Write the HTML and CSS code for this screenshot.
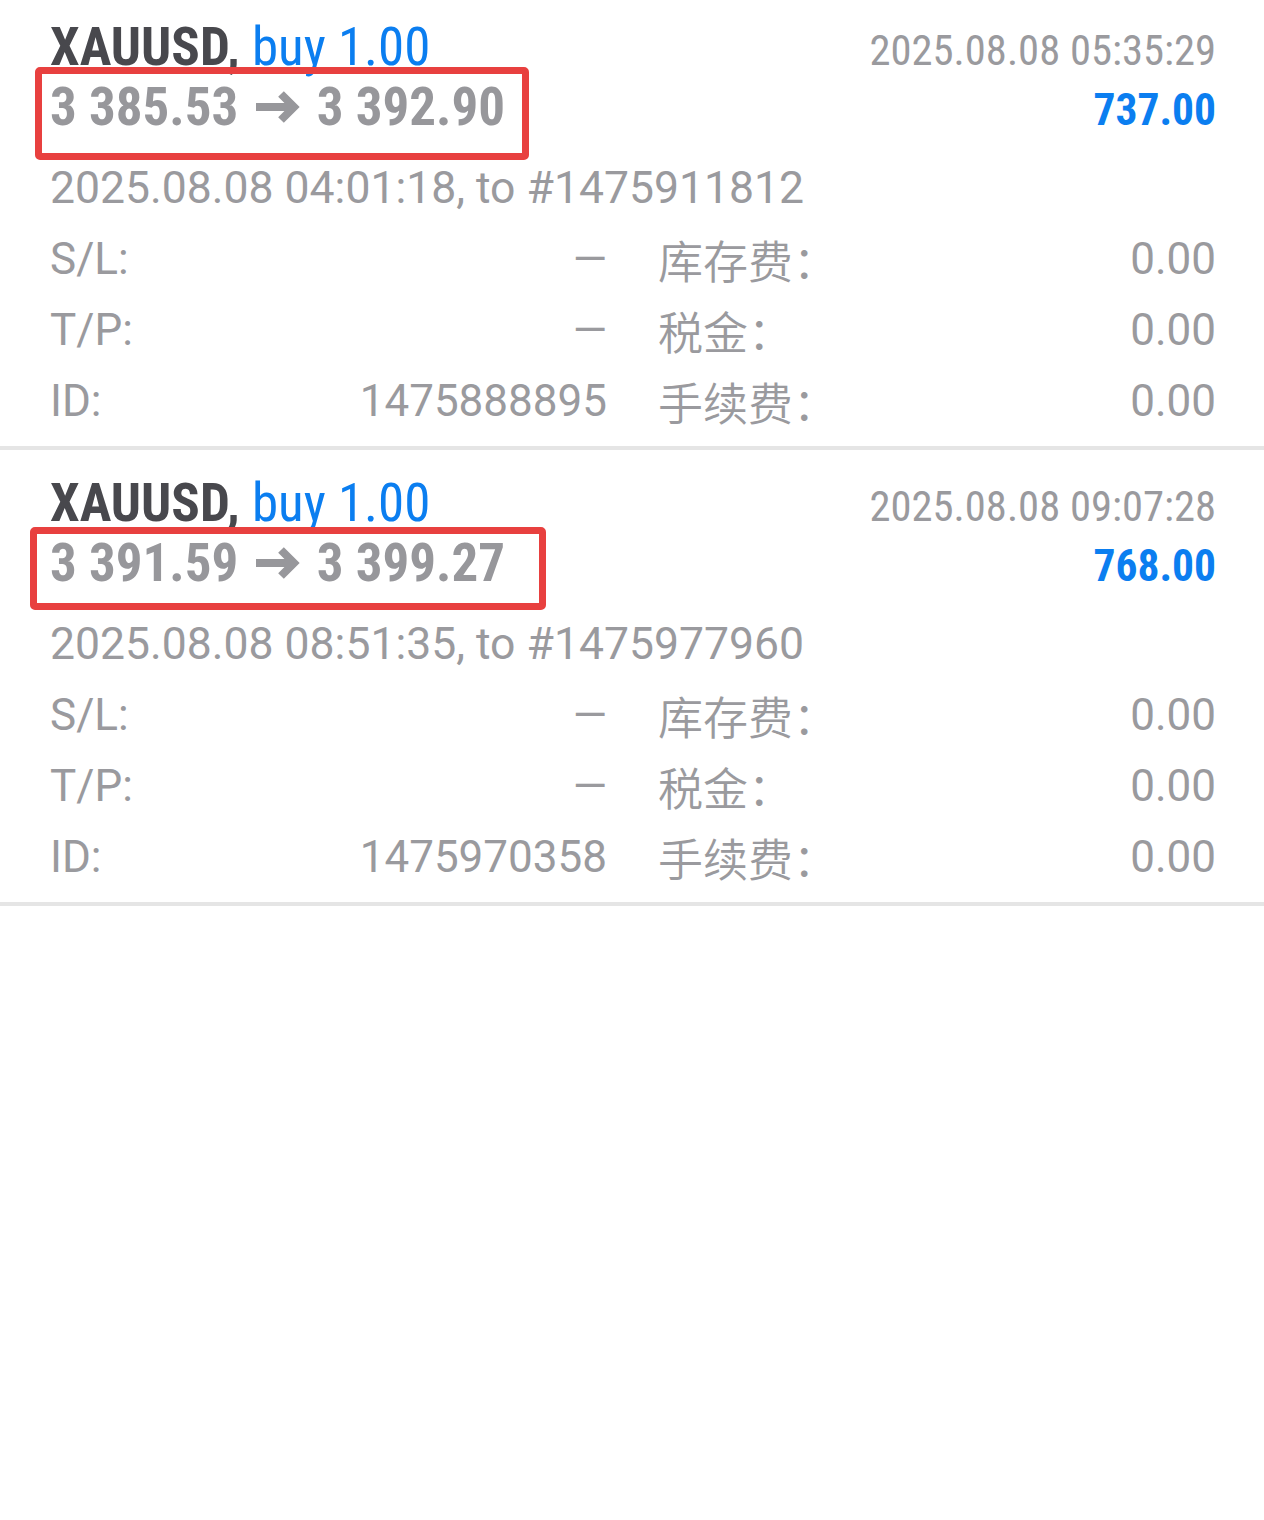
FILE: index.html
```html
<!DOCTYPE html>
<html lang="zh">
<head>
  <meta charset="UTF-8" />
  <meta name="viewport" content="width=device-width, initial-scale=1.0" />
  <title>History</title>
  <link rel="stylesheet" href="styles.css">
</head>
<body>
  <div class="deal">
    <div class="line line-top">
      <span class="title"><span class="symbol">XAUUSD,</span> <span class="side">buy 1.00</span></span>
      <span class="open-time">2025.08.08 05:35:29</span>
    </div>
    <div class="line line-price">
      <span class="price mark-a">3 385.53 <svg class="arrow" viewBox="0 0 45 36"><path d="M0 18H38M25 5L38 18L25 31"/></svg> 3 392.90</span>
      <span class="profit">737.00</span>
    </div>
    <div class="close-info">2025.08.08 04:01:18, to #1475911812</div>
    <div class="details">
      <div class="cell"><span>S/L:</span><span>—</span></div>
      <div class="cell"><span class="cjk">库存费：</span><span>0.00</span></div>
      <div class="cell"><span>T/P:</span><span>—</span></div>
      <div class="cell"><span class="cjk">税金：</span><span>0.00</span></div>
      <div class="cell"><span>ID:</span><span>1475888895</span></div>
      <div class="cell"><span class="cjk">手续费：</span><span>0.00</span></div>
    </div>
  </div>

  <div class="deal">
    <div class="line line-top">
      <span class="title"><span class="symbol">XAUUSD,</span> <span class="side">buy 1.00</span></span>
      <span class="open-time">2025.08.08 09:07:28</span>
    </div>
    <div class="line line-price">
      <span class="price mark-b">3 391.59 <svg class="arrow" viewBox="0 0 45 36"><path d="M0 18H38M25 5L38 18L25 31"/></svg> 3 399.27</span>
      <span class="profit">768.00</span>
    </div>
    <div class="close-info">2025.08.08 08:51:35, to #1475977960</div>
    <div class="details">
      <div class="cell"><span>S/L:</span><span>—</span></div>
      <div class="cell"><span class="cjk">库存费：</span><span>0.00</span></div>
      <div class="cell"><span>T/P:</span><span>—</span></div>
      <div class="cell"><span class="cjk">税金：</span><span>0.00</span></div>
      <div class="cell"><span>ID:</span><span>1475970358</span></div>
      <div class="cell"><span class="cjk">手续费：</span><span>0.00</span></div>
    </div>
  </div>
</body>
</html>
```

FILE: styles.css
```css
body {
  margin: -6px 0 0;
  background-color: #fff;
  font-family: Roboto, "Noto Sans CJK SC", sans-serif;
  color: #9a9a9e;
}
.deal {
  padding: 23px 48px 9px 50px;
  border-bottom: 4px solid #e5e5e5;
}
.line {
  display: flex;
  justify-content: space-between;
  align-items: baseline;
  height: 60px;
  line-height: 60px;
}
.title {
  font-size: 53px;
  font-stretch: 87.5%;
}
.symbol {
  font-weight: bold;
  color: #48484d;
}
.side {
  color: #0b7ef0;
}
.open-time {
  font-size: 42.6px;
  font-stretch: 87.5%;
}
.price {
  position: relative;
  font-size: 53px;
  font-weight: bold;
  font-stretch: 87.5%;
  color: #97979b;
}
.arrow {
  width: 45px;
  height: 36px;
  margin: 0 4px 0 5px;
  vertical-align: baseline;
  fill: none;
  stroke: #97979b;
  stroke-width: 8;
}
.price::after {
  content: "";
  position: absolute;
  border: 7px solid #e8403f;
  border-radius: 5px;
}
.mark-a::after {
  top: -10px;
  bottom: -23px;
  left: -15px;
  right: -24px;
}
.mark-b::after {
  top: -6px;
  bottom: -17px;
  left: -20px;
  right: -41px;
}
.profit {
  font-size: 43.5px;
  font-weight: bold;
  font-stretch: 87.5%;
  color: #0b7ef0;
}
.close-info {
  margin-top: 16px;
  font-size: 44.5px;
  line-height: 71px;
}
.details {
  display: grid;
  grid-template-columns: 557px 1fr;
  column-gap: 51px;
  font-size: 44px;
  line-height: 71px;
}
.cell {
  display: flex;
  justify-content: space-between;
}
.cjk {
  font-family: "Noto Sans CJK SC", sans-serif;
  font-size: 45px;
  font-weight: 350;
}
```
